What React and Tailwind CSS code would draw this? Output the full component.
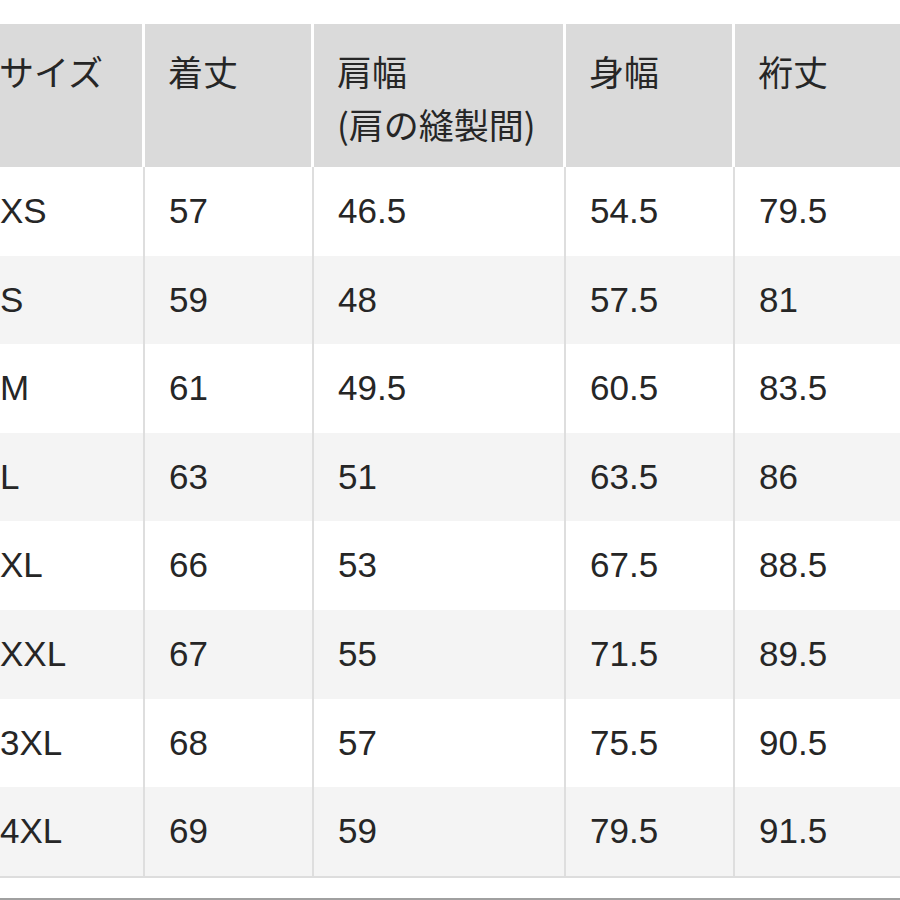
import React from "react";

const rows = [
  ["XS", "57", "46.5", "54.5", "79.5"],
  ["S", "59", "48", "57.5", "81"],
  ["M", "61", "49.5", "60.5", "83.5"],
  ["L", "63", "51", "63.5", "86"],
  ["XL", "66", "53", "67.5", "88.5"],
  ["XXL", "67", "55", "71.5", "89.5"],
  ["3XL", "68", "57", "75.5", "90.5"],
  ["4XL", "69", "59", "79.5", "91.5"],
];

const widths = ["w-[169px]", "w-[169px]", "w-[252px]", "w-[169px]", "flex-1"];

const jp = { fontFamily: '"Noto Sans CJK JP", "Liberation Sans", sans-serif' };
const num = { fontFamily: '"Liberation Sans", "Noto Sans CJK JP", sans-serif' };

export default function App() {
  return (
    <div className="w-[900px] h-[900px] bg-white overflow-hidden text-[#262626]">
      <div className="pt-[24px] ml-[-24px] w-[980px]">
        <div className="flex h-[143px] bg-white">
          {[
            ["サイズ"],
            ["着丈"],
            ["肩幅", "(肩の縫製間)"],
            ["身幅"],
            ["裄丈"],
          ].map((lines, i) => (
            <div
              key={i}
              className={`${widths[i]} shrink-0 bg-[#dadada] bg-clip-padding ${i < 4 ? "border-r-[3px] border-white" : ""} pl-[23px] pt-[20px] text-[35px] leading-[53px]`}
              style={jp}
            >
              {lines.map((l, j) => (
                <div key={j}>{l}</div>
              ))}
            </div>
          ))}
        </div>
        {rows.map((r, ri) => (
          <div
            key={ri}
            className={`flex h-[88.6px] ${ri % 2 === 1 ? "bg-[#f4f4f4]" : "bg-white"}`}
          >
            {r.map((c, ci) => (
              <div
                key={ci}
                className={`${widths[ci]} shrink-0 flex items-center pl-[24px] text-[35px] ${ci < 4 ? "border-r-2 border-[#dedede]" : ""}`}
                style={num}
              >
                {c}
              </div>
            ))}
          </div>
        ))}
        <div className="h-[2px] bg-[#dddddd]" />
        <div className="h-[20px]" />
        <div className="h-[2px] bg-[#a0a0a0]" />
      </div>
    </div>
  );
}
